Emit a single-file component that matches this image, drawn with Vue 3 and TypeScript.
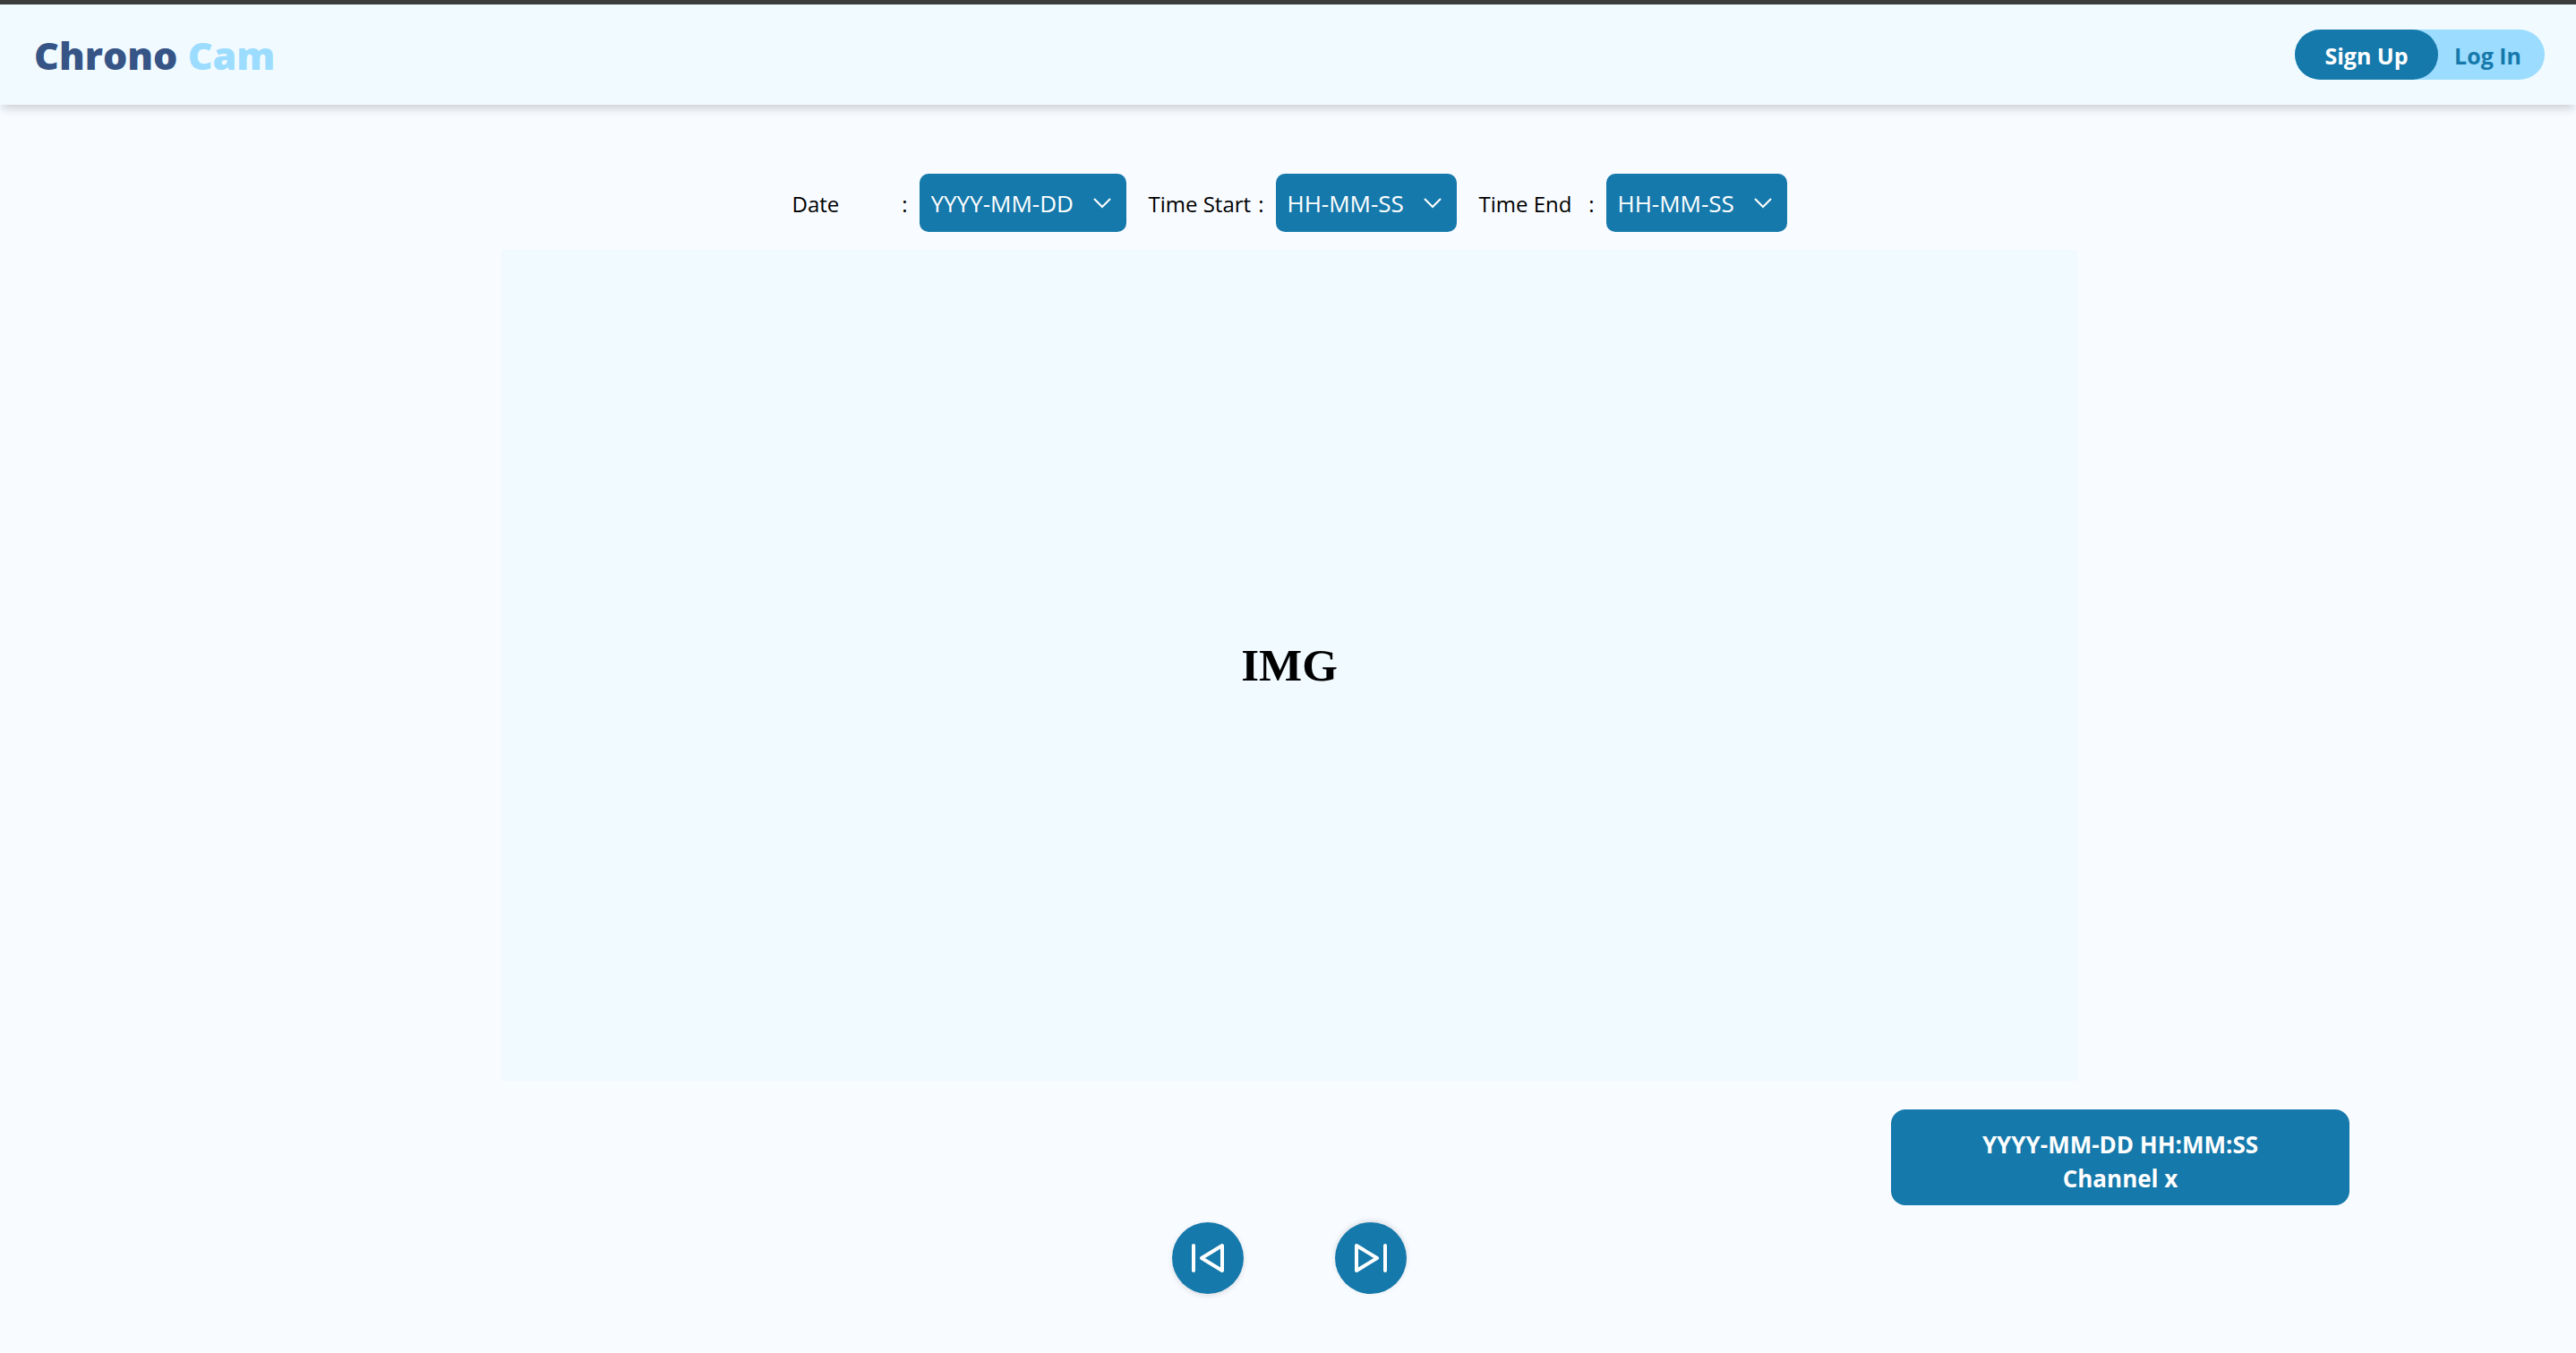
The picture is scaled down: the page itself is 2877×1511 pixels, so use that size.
<script setup lang="ts">
import { ref } from 'vue'

interface Filter {
  id: string
  label: string
  placeholder: string
  wide?: boolean
}

const filters: Filter[] = [
  { id: 'date', label: 'Date', placeholder: 'YYYY-MM-DD', wide: true },
  { id: 'time-start', label: 'Time Start', placeholder: 'HH-MM-SS' },
  { id: 'time-end', label: 'Time End', placeholder: 'HH-MM-SS' },
]

const timestamp = ref('YYYY-MM-DD HH:MM:SS')
const channel = ref('Channel x')
</script>

<template>
  <div class="page">
    <header class="header">
      <h1 class="logo">Chrono <span class="logo-accent">Cam</span></h1>
      <nav class="auth">
        <button type="button" class="sign-up">Sign Up</button>
        <button type="button" class="log-in">Log In</button>
      </nav>
    </header>

    <main class="main">
      <form class="filters">
        <div v-for="f in filters" :key="f.id" class="filter">
          <label :for="f.id" class="filter-label"><span>{{ f.label }}</span><span>:</span></label>
          <div class="select-wrap" :class="{ wide: f.wide }">
            <select :id="f.id" class="select">
              <option>{{ f.placeholder }}</option>
            </select>
            <svg class="chevron" viewBox="0 0 20 12" aria-hidden="true">
              <path d="M1 1 L10 10 L19 1" />
            </svg>
          </div>
        </div>
      </form>

      <section class="frame">
        <h2 class="frame-title">IMG</h2>
      </section>

      <aside class="info">
        <div>{{ timestamp }}</div>
        <div>{{ channel }}</div>
      </aside>

      <div class="controls">
        <button type="button" class="round" aria-label="Previous">
          <svg viewBox="0 0 80 80" aria-hidden="true">
            <path d="M24 26 V54 M56 26 V54 L33 40 Z" />
          </svg>
        </button>
        <button type="button" class="round next" aria-label="Next">
          <svg viewBox="0 0 80 80" aria-hidden="true">
            <path d="M56 26 V54 M24 26 V54 L47 40 Z" />
          </svg>
        </button>
      </div>
    </main>
  </div>
</template>

<style>
body {
  background: #f8fbff;
}
</style>

<style scoped>
.page {
  min-height: 100vh;
  box-sizing: border-box;
  border-top: 5px solid #3c3c3c;
  background: #f8fbff;
  font-family: "Segoe UI", "Open Sans", "Noto Sans", sans-serif;
  font-size: 26px;
  color: #000;
}

.header {
  display: flex;
  align-items: center;
  justify-content: space-between;
  height: 112px;
  padding: 0 35px 0 38px;
  background: #f0faff;
  box-shadow: 0 6px 10px -2px rgba(0, 0, 0, 0.18);
}

.logo {
  margin: 0;
  padding-top: 2px;
  font-size: 43px;
  font-weight: 800;
  line-height: 60px;
  color: #365486;
}

.logo-accent {
  color: #9bdcff;
}

.auth {
  display: flex;
  height: 56px;
  border-radius: 28px;
  background: #9bdcff;
}

.auth button {
  border: 0;
  padding: 2px 0 0;
  border-radius: 28px;
  font: inherit;
  font-size: 25px;
  font-weight: 700;
  cursor: pointer;
}

.auth .sign-up {
  width: 160px;
  background: #1679ab;
  color: #fff;
}

.auth .log-in {
  width: 119px;
  padding-right: 8px;
  background: transparent;
  color: #1679ab;
}

.main {
  display: flex;
  flex-direction: column;
  align-items: center;
  padding: 77px 0 64px 3px;
}

.filters {
  display: flex;
  flex-wrap: wrap;
  justify-content: center;
  gap: 25px;
}

.filter {
  display: flex;
  align-items: center;
  gap: 13px;
}

.filter-label {
  display: flex;
  justify-content: space-between;
  width: 129px;
  padding-top: 2px;
  font-size: 24px;
  white-space: nowrap;
}

.select-wrap {
  position: relative;
  width: 202px;
}

.select-wrap.wide {
  width: 231px;
}

.select {
  appearance: none;
  display: block;
  width: 100%;
  height: 65px;
  padding: 0 13px;
  border: 0;
  border-radius: 10px;
  background: #1679ab;
  color: #fff;
  font: inherit;
}

.chevron {
  position: absolute;
  right: 17px;
  top: 27px;
  width: 20px;
  height: 12px;
  fill: none;
  stroke: #fff;
  stroke-width: 2;
  pointer-events: none;
}

.frame {
  display: flex;
  align-items: center;
  justify-content: center;
  width: 1760px;
  max-width: 92%;
  aspect-ratio: 55 / 29;
  margin-top: 20px;
  background: #f0faff;
}

.frame-title {
  margin: 0;
  font-family: "Liberation Serif", serif;
  font-size: 51px;
  font-weight: 700;
}

.info {
  align-self: flex-end;
  box-sizing: border-box;
  width: 512px;
  max-width: 80%;
  margin: 32px 253px 0 0;
  padding: 20px 16px 11px;
  border-radius: 16px;
  background: #1679ab;
  color: #fff;
  font-weight: 700;
  line-height: 38px;
  text-align: center;
}

.controls {
  display: flex;
  gap: 102px;
  margin-top: 19px;
}

.round {
  width: 80px;
  height: 80px;
  padding: 0;
  border: 0;
  border-radius: 50%;
  background: #1679ab;
  box-shadow: 0 2px 6px rgba(0, 0, 0, 0.12);
  cursor: pointer;
}

.round.next {
  box-shadow: 0 -2px 6px rgba(0, 0, 0, 0.12);
}

.round svg {
  display: block;
  width: 80px;
  height: 80px;
  fill: none;
  stroke: #fff;
  stroke-width: 4;
  stroke-linecap: round;
  stroke-linejoin: round;
}
</style>
